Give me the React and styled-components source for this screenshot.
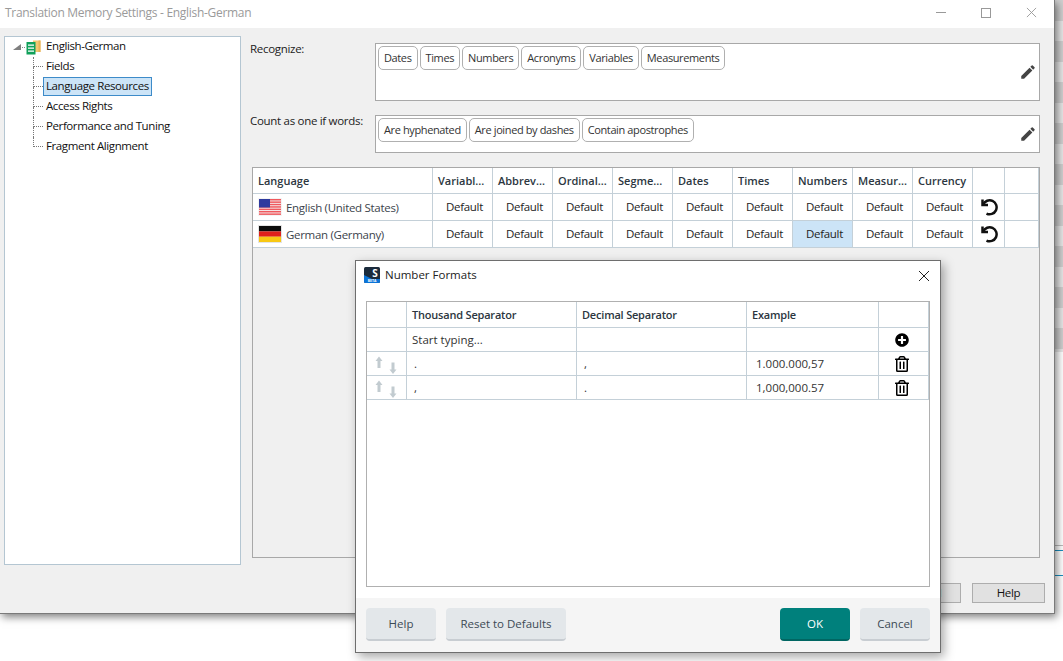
import React from "react";
import styled, { createGlobalStyle } from "styled-components";
import { FaPlusCircle, FaRegTrashAlt } from "react-icons/fa";

const recognizeTags = ["Dates", "Times", "Numbers", "Acronyms", "Variables", "Measurements"];
const countTags = ["Are hyphenated", "Are joined by dashes", "Contain apostrophes"];
const treeItems = ["Fields", "Language Resources", "Access Rights", "Performance and Tuning", "Fragment Alignment"];
const resourceColumns = ["Variabl...", "Abbrev...", "Ordinal...", "Segme...", "Dates", "Times", "Numbers", "Measur...", "Currency"];

const USFlag = () => (
  <FlagSvg viewBox="0 0 24 18">
    <rect width="24" height="18" fill="#f4f4f4" />
    {[1, 3.4, 5.8, 8.2, 10.6, 13, 15.4].map((y) => (
      <rect key={y} x="1" y={y} width="22" height="1.5" fill="#f0595e" />
    ))}
    <rect x="1" y="1" width="11" height="8.5" fill="#2e3a9e" />
  </FlagSvg>
);

const DEFlag = () => (
  <FlagSvg viewBox="0 0 24 18">
    <rect width="24" height="18" fill="#e4e4e4" />
    <rect x="1" y="1" width="22" height="5.4" fill="#0c0c0c" />
    <rect x="1" y="6.4" width="22" height="5.3" fill="#e0201c" />
    <rect x="1" y="11.7" width="22" height="5.3" fill="#f8c814" />
  </FlagSvg>
);

const PencilIcon = () => (
  <EditSvg viewBox="0 0 24 24">
    <path
      fill="#444"
      d="M3 17.25V21h3.75L17.81 9.94l-3.75-3.75L3 17.25zM20.71 7.04a1 1 0 0 0 0-1.41l-2.34-2.34a1 1 0 0 0-1.41 0l-1.83 1.83 3.75 3.75 1.83-1.83z"
    />
  </EditSvg>
);

const UndoIcon = () => (
  <svg width="18" height="18" viewBox="0 0 18 18">
    <path d="M2.500 1.500v5.500h5.500" fill="none" stroke="#111" strokeWidth="2.500" />
    <path d="M3.200 6.500A7 7 0 1 1 6.500 15.600" fill="none" stroke="#111" strokeWidth="2.500" />
  </svg>
);

const MoveArrows = () => (
  <svg width="28" height="20" viewBox="0 0 28 20">
    <path fill="#c2cbd0" d="M6 1.500 9.500 6H7.500v7h-3V6h-2zM20 19l-3.500-4.500h2v-7h3v7h2z" />
  </svg>
);

const AppLogo = () => (
  <svg width="16" height="16" viewBox="0 0 16 16">
    <rect width="16" height="16" rx="1.5" fill="#1b2b3c" />
    <path d="M0 8 L8 12 H16 V14.500 a1.500 1.500 0 0 1-1.500 1.500 H1.500 A1.500 1.500 0 0 1 0 14.500 Z" fill="#0b74d8" />
    <text x="11" y="9.500" fontSize="10" fontWeight="700" fill="#fff" textAnchor="middle" fontFamily="Open Sans, sans-serif">S</text>
    <text x="8" y="15.300" fontSize="3.400" fontWeight="700" fill="#fff" textAnchor="middle" fontFamily="Open Sans, sans-serif">BETA</text>
  </svg>
);

const TmIcon = () => (
  <svg width="15" height="15" viewBox="0 0 15 15">
    <rect x="7" y="0.500" width="7.500" height="11.500" fill="#f2c672" />
    <rect x="12.500" y="0.500" width="2" height="11.500" fill="#e8b257" />
    <rect x="0.500" y="2" width="9" height="12.500" fill="#10a05a" />
    <path stroke="#fff" strokeWidth="1.300" d="M2 5.200h6M2 8.200h6M2 11.200h6" />
  </svg>
);

const CloseGlyph = ({ size, color }) => (
  <svg width={size} height={size} viewBox="0 0 12 12">
    <path d="M1 1l10 10M11 1L1 11" stroke={color} strokeWidth="1" fill="none" />
  </svg>
);

const App = () => {
  return (
    <>
      <GlobalStyle />
      <Page>
        <Window>
          <TitleBar>
            <WindowTitle>Translation Memory Settings - English-German</WindowTitle>
            <WindowControls>
              <MinimizeMark />
              <MaximizeMark />
              <CloseGlyph size={11} color="#999" />
            </WindowControls>
          </TitleBar>
          <WindowBody>
            <TreePanel>
              <TreeRoot>
                <svg width="8" height="6" viewBox="0 0 8 6">
                  <path d="M8 0v6H0z" fill="#7f7f7f" />
                </svg>
                <RootDots />
                <TmIcon />
                <RootLabel>English-German</RootLabel>
              </TreeRoot>
              <TreeChildren>
                {treeItems.map((item, index) => (
                  <TreeRow key={item}>
                    <Connector>
                      <ConnectorTop />
                      <ConnectorBottom $last={index === treeItems.length - 1} />
                    </Connector>
                    <TreeLabel $selected={item === "Language Resources"}>{item}</TreeLabel>
                  </TreeRow>
                ))}
              </TreeChildren>
            </TreePanel>
            <Content>
              <FieldRow>
                <FieldLabel>Recognize:</FieldLabel>
                <TagBox $height={58}>
                  {recognizeTags.map((tag) => (
                    <Tag key={tag}>{tag}</Tag>
                  ))}
                  <EditButton>
                    <PencilIcon />
                  </EditButton>
                </TagBox>
              </FieldRow>
              <FieldRow>
                <FieldLabel>Count as one if words:</FieldLabel>
                <TagBox $height={38}>
                  {countTags.map((tag) => (
                    <Tag key={tag}>{tag}</Tag>
                  ))}
                  <EditButton>
                    <PencilIcon />
                  </EditButton>
                </TagBox>
              </FieldRow>
              <ResourcePanel>
                <ResourceTable>
                  <colgroup>
                    <col width="180" />
                    {resourceColumns.map((name) => (
                      <col key={name} width="60" />
                    ))}
                    <col width="32" />
                    <col width="34" />
                  </colgroup>
                  <thead>
                    <tr>
                      <HeadCell>Language</HeadCell>
                      {resourceColumns.map((name) => (
                        <HeadCell key={name}>{name}</HeadCell>
                      ))}
                      <HeadCell />
                      <HeadCell />
                    </tr>
                  </thead>
                  <tbody>
                    <tr>
                      <LanguageCell>
                        <LanguageName>
                          <USFlag />
                          English (United States)
                        </LanguageName>
                      </LanguageCell>
                      {resourceColumns.map((name) => (
                        <ValueCell key={name}>Default</ValueCell>
                      ))}
                      <IconCell>
                        <UndoIcon />
                      </IconCell>
                      <ValueCell />
                    </tr>
                    <tr>
                      <LanguageCell>
                        <LanguageName>
                          <DEFlag />
                          German (Germany)
                        </LanguageName>
                      </LanguageCell>
                      {resourceColumns.map((name) => (
                        <ValueCell key={name} $selected={name === "Numbers"}>
                          Default
                        </ValueCell>
                      ))}
                      <IconCell>
                        <UndoIcon />
                      </IconCell>
                      <ValueCell />
                    </tr>
                  </tbody>
                </ResourceTable>
              </ResourcePanel>
              <WindowFooter>
                <WindowButton>Cancel</WindowButton>
                <WindowButton>Help</WindowButton>
              </WindowFooter>
            </Content>
          </WindowBody>

          <Dialog>
            <DialogTitle>
              <DialogName>
                <AppLogo />
                Number Formats
              </DialogName>
              <DialogClose>
                <CloseGlyph size={12} color="#222" />
              </DialogClose>
            </DialogTitle>
            <DialogMain>
              <FormatFrame>
                <FormatTable>
                  <colgroup>
                    <col width="40" />
                    <col width="170" />
                    <col width="170" />
                    <col width="132" />
                    <col width="50" />
                  </colgroup>
                  <thead>
                    <tr>
                      <FormatHead />
                      <FormatHead>Thousand Separator</FormatHead>
                      <FormatHead>Decimal Separator</FormatHead>
                      <FormatHead>Example</FormatHead>
                      <FormatHead />
                    </tr>
                  </thead>
                  <tbody>
                    <tr>
                      <FormatCell />
                      <FormatCell $pad={5}>Start typing...</FormatCell>
                      <FormatCell />
                      <FormatCell />
                      <FormatIconCell>
                        <FaPlusCircle size={14} color="#000" />
                      </FormatIconCell>
                    </tr>
                    <tr>
                      <ArrowCell>
                        <MoveArrows />
                      </ArrowCell>
                      <FormatCell $pad={7}>.</FormatCell>
                      <FormatCell $pad={7}>,</FormatCell>
                      <FormatCell $pad={9}>1.000.000,57</FormatCell>
                      <FormatIconCell>
                        <FaRegTrashAlt size={16} color="#000" />
                      </FormatIconCell>
                    </tr>
                    <tr>
                      <ArrowCell>
                        <MoveArrows />
                      </ArrowCell>
                      <FormatCell $pad={7}>,</FormatCell>
                      <FormatCell $pad={7}>.</FormatCell>
                      <FormatCell $pad={9}>1,000,000.57</FormatCell>
                      <FormatIconCell>
                        <FaRegTrashAlt size={16} color="#000" />
                      </FormatIconCell>
                    </tr>
                  </tbody>
                </FormatTable>
              </FormatFrame>
            </DialogMain>
            <DialogFooter>
              <FooterGroup>
                <DialogButton $width={70}>Help</DialogButton>
                <DialogButton $width={120}>Reset to Defaults</DialogButton>
              </FooterGroup>
              <FooterGroup>
                <DialogButton $width={70} $primary>
                  OK
                </DialogButton>
                <DialogButton $width={70}>Cancel</DialogButton>
              </FooterGroup>
            </DialogFooter>
          </Dialog>
        </Window>
        <BackStrip>
          <BackBands />
          <BackLines />
        </BackStrip>
      </Page>
    </>
  );
};

export default App;

const GlobalStyle = createGlobalStyle`
  html, body {
    margin: 0;
    padding: 0;
    background: #fff;
  }
  * {
    box-sizing: border-box;
  }
  body {
    font-family: "Open Sans", "Noto Sans", Arial, sans-serif;
    font-size: 11.5px;
    color: #222;
    overflow: hidden;
  }
`;

const Page = styled.div`
  display: flex;
  width: 1063px;
  height: 661px;
  overflow: hidden;
`;

const Window = styled.div`
  position: relative;
  z-index: 1;
  flex: 0 0 1055px;
  height: 614px;
  display: flex;
  flex-direction: column;
  background: #f0f0f0;
  border-right: 1px solid #7a7a7a;
  border-bottom: 1px solid #7a7a7a;
  box-shadow: 2px 3px 8px rgba(0, 0, 0, 0.5);
`;

const TitleBar = styled.div`
  flex: 0 0 28px;
  display: flex;
  align-items: center;
  justify-content: space-between;
  background: #fff;
  padding: 0 17px 3px 5px;
  letter-spacing: -0.3px;
`;

const WindowTitle = styled.div`
  color: #9a9a9a;
  font-size: 12px;
`;

const WindowControls = styled.div`
  display: flex;
  align-items: center;
  gap: 35px;
`;

const MinimizeMark = styled.div`
  width: 10px;
  height: 1px;
  background: #999;
`;

const MaximizeMark = styled.div`
  width: 10px;
  height: 10px;
  border: 1px solid #999;
`;

const WindowBody = styled.div`
  flex: 1;
  display: flex;
  padding: 8px 9px 9px 4px;
  gap: 9px;
  letter-spacing: -0.3px;
`;

const TreePanel = styled.div`
  flex: 0 0 237px;
  height: 529px;
  background: #fff;
  border: 1px solid #b4c6d2;
  letter-spacing: -0.4px;
`;

const TreeRoot = styled.div`
  height: 20px;
  display: flex;
  align-items: center;
  padding-left: 8px;
`;

const RootDots = styled.span`
  width: 3px;
  margin: 0 1px 0 1px;
  border-top: 1px dotted #888;
`;

const RootLabel = styled.span`
  margin: 0 0 3px 5px;
  color: #111;
`;

const TreeChildren = styled.div`
  margin-left: 28px;
`;

const TreeRow = styled.div`
  height: 20px;
  display: flex;
  align-items: flex-start;
`;

const Connector = styled.div`
  flex: 0 0 10px;
  height: 20px;
`;

const ConnectorTop = styled.div`
  height: 10px;
  border-left: 1px dotted #777;
  border-bottom: 1px dotted #777;
`;

const ConnectorBottom = styled.div`
  height: 10px;
  border-left: ${(props) => (props.$last ? "none" : "1px dotted #777")};
`;

const TreeLabel = styled.span`
  height: 19px;
  line-height: 16px;
  padding: 0 2px;
  border: 1px solid ${(props) => (props.$selected ? "#3d8bc9" : "transparent")};
  background: ${(props) => (props.$selected ? "#cce4f7" : "transparent")};
  color: #111;
`;

const Content = styled.div`
  flex: 1;
  display: flex;
  flex-direction: column;
  padding-top: 7px;
`;

const FieldRow = styled.div`
  display: flex;
  margin-right: 5px;
  margin-bottom: 14px;
`;

const FieldLabel = styled.div`
  flex: 0 0 125px;
  line-height: 11px;
  color: #222;
`;

const TagBox = styled.div`
  position: relative;
  flex: 1;
  height: ${(props) => props.$height}px;
  display: flex;
  align-items: flex-start;
  gap: 2px;
  padding: 2px;
  background: #fff;
  border: 1px solid #a8a8a8;
`;

const Tag = styled.div`
  height: 24px;
  line-height: 22px;
  padding: 0 5px;
  font-size: 11px;
  letter-spacing: -0.38px;
  background: #fff;
  border: 1px solid #b0b0b0;
  border-radius: 5px;
  color: #333;
  white-space: nowrap;
`;

const EditButton = styled.div`
  position: absolute;
  right: 2px;
  top: 50%;
  transform: translateY(-50%);
  line-height: 0;
`;

const EditSvg = styled.svg`
  width: 18px;
  height: 18px;
`;

const FlagSvg = styled.svg`
  width: 24px;
  height: 18px;
  flex: none;
`;

const ResourcePanel = styled.div`
  margin: 0 5px 0 2px;
  height: 391px;
  background: #f0f0f0;
  border: 1px solid #a8a8a8;
`;

const ResourceTable = styled.table`
  table-layout: fixed;
  width: 786px;
  border-collapse: separate;
  border-spacing: 0;
  background: #fff;
`;

const HeadCell = styled.th`
  height: 26px;
  padding: 0 0 0 5px;
  text-align: left;
  font-size: 11px;
  font-weight: 600;
  letter-spacing: 0;
  color: #2c3640;
  white-space: nowrap;
  overflow: hidden;
  border-right: 1px solid #c4d0d8;
  border-bottom: 1px solid #c4d0d8;
`;

const LanguageCell = styled.td`
  height: 27px;
  padding: 0 0 0 5px;
  border-right: 1px solid #c4d0d8;
  border-bottom: 1px solid #c4d0d8;
`;

const LanguageName = styled.div`
  display: flex;
  align-items: center;
  gap: 4px;
  color: #3c444c;
`;

const ValueCell = styled.td`
  height: 27px;
  padding: 0 0 2px 4px;
  text-align: center;
  color: #222;
  background: ${(props) => (props.$selected ? "#cce4f7" : "#fff")};
  border-right: 1px solid #c4d0d8;
  border-bottom: 1px solid #c4d0d8;
`;

const IconCell = styled.td`
  height: 27px;
  padding: 0;
  text-align: center;
  line-height: 0;
  border-right: 1px solid #c4d0d8;
  border-bottom: 1px solid #c4d0d8;
`;

const WindowFooter = styled.div`
  margin-top: 25px;
  display: flex;
  justify-content: flex-end;
  gap: 11px;
`;

const WindowButton = styled.div`
  width: 73px;
  height: 20px;
  line-height: 18px;
  text-align: center;
  background: #e1e1e1;
  border: 1px solid #adadad;
  color: #111;
`;

const Dialog = styled.div`
  position: absolute;
  left: 355px;
  top: 260px;
  width: 586px;
  height: 393px;
  display: flex;
  flex-direction: column;
  background: #fff;
  border: 1px solid #6e6e6e;
  box-shadow: 3px 4px 10px rgba(0, 0, 0, 0.35);
`;

const DialogTitle = styled.div`
  flex: 0 0 40px;
  display: flex;
  justify-content: space-between;
  padding: 6px 10px 0 8px;
  align-items: flex-start;
`;

const DialogName = styled.div`
  display: flex;
  align-items: flex-start;
  gap: 5px;
  height: 16px;
  line-height: 16px;
  color: #222;
`;

const DialogClose = styled.div`
  margin-top: 3px;
  line-height: 0;
`;

const DialogMain = styled.div`
  flex: 1;
  padding: 0 10px 11px;
`;

const FormatFrame = styled.div`
  height: 100%;
  border: 1px solid #b0b0b0;
`;

const FormatTable = styled.table`
  table-layout: fixed;
  width: 562px;
  border-collapse: separate;
  border-spacing: 0;
`;

const FormatHead = styled.th`
  height: 26px;
  padding: 0 0 0 5px;
  text-align: left;
  font-size: 11px;
  font-weight: 600;
  letter-spacing: -0.2px;
  color: #2c3640;
  border-right: 1px solid #c4d0d8;
  border-bottom: 1px solid #c4d0d8;
`;

const FormatCell = styled.td`
  height: 24px;
  padding: 0 0 0 ${(props) => props.$pad || 0}px;
  color: #333;
  border-right: 1px solid #c4d0d8;
  border-bottom: 1px solid #c4d0d8;
`;

const ArrowCell = styled.td`
  height: 24px;
  padding: 2px 0 0 6px;
  line-height: 0;
  border-right: 1px solid #c4d0d8;
  border-bottom: 1px solid #c4d0d8;
`;

const FormatIconCell = styled.td`
  height: 24px;
  padding: 0 4px 0 0;
  text-align: center;
  line-height: 0;
  border-right: 1px solid #c4d0d8;
  border-bottom: 1px solid #c4d0d8;
`;

const DialogFooter = styled.div`
  flex: 0 0 54px;
  display: flex;
  justify-content: space-between;
  padding: 10px;
  background: #f5f5f5;
`;

const FooterGroup = styled.div`
  display: flex;
  gap: 10px;
`;

const DialogButton = styled.div`
  width: ${(props) => props.$width}px;
  height: 33px;
  line-height: 32px;
  text-align: center;
  border-radius: 4px;
  background: ${(props) => (props.$primary ? "#00807c" : "#e3e7ea")};
  border-bottom: 2px solid ${(props) => (props.$primary ? "#006662" : "#c8cdd2")};
  color: ${(props) => (props.$primary ? "#fff" : "#3c4a55")};
`;

const BackStrip = styled.div`
  flex: 1;
  display: flex;
  flex-direction: column;
  height: 613px;
`;

const BackBands = styled.div`
  flex: 0 0 352px;
  background: repeating-linear-gradient(to bottom, #cfcfcf 0 21px, #e6e6e6 21px 41px);
`;

const BackLines = styled.div`
  height: 31px;
  margin-top: 193px;
  border-top: 1px solid #bbb;
  box-shadow: inset 0 4px 0 #fff, inset 0 5px 0 #1a8fc0;
  border-bottom: 1px solid #1a8fc0;
`;
